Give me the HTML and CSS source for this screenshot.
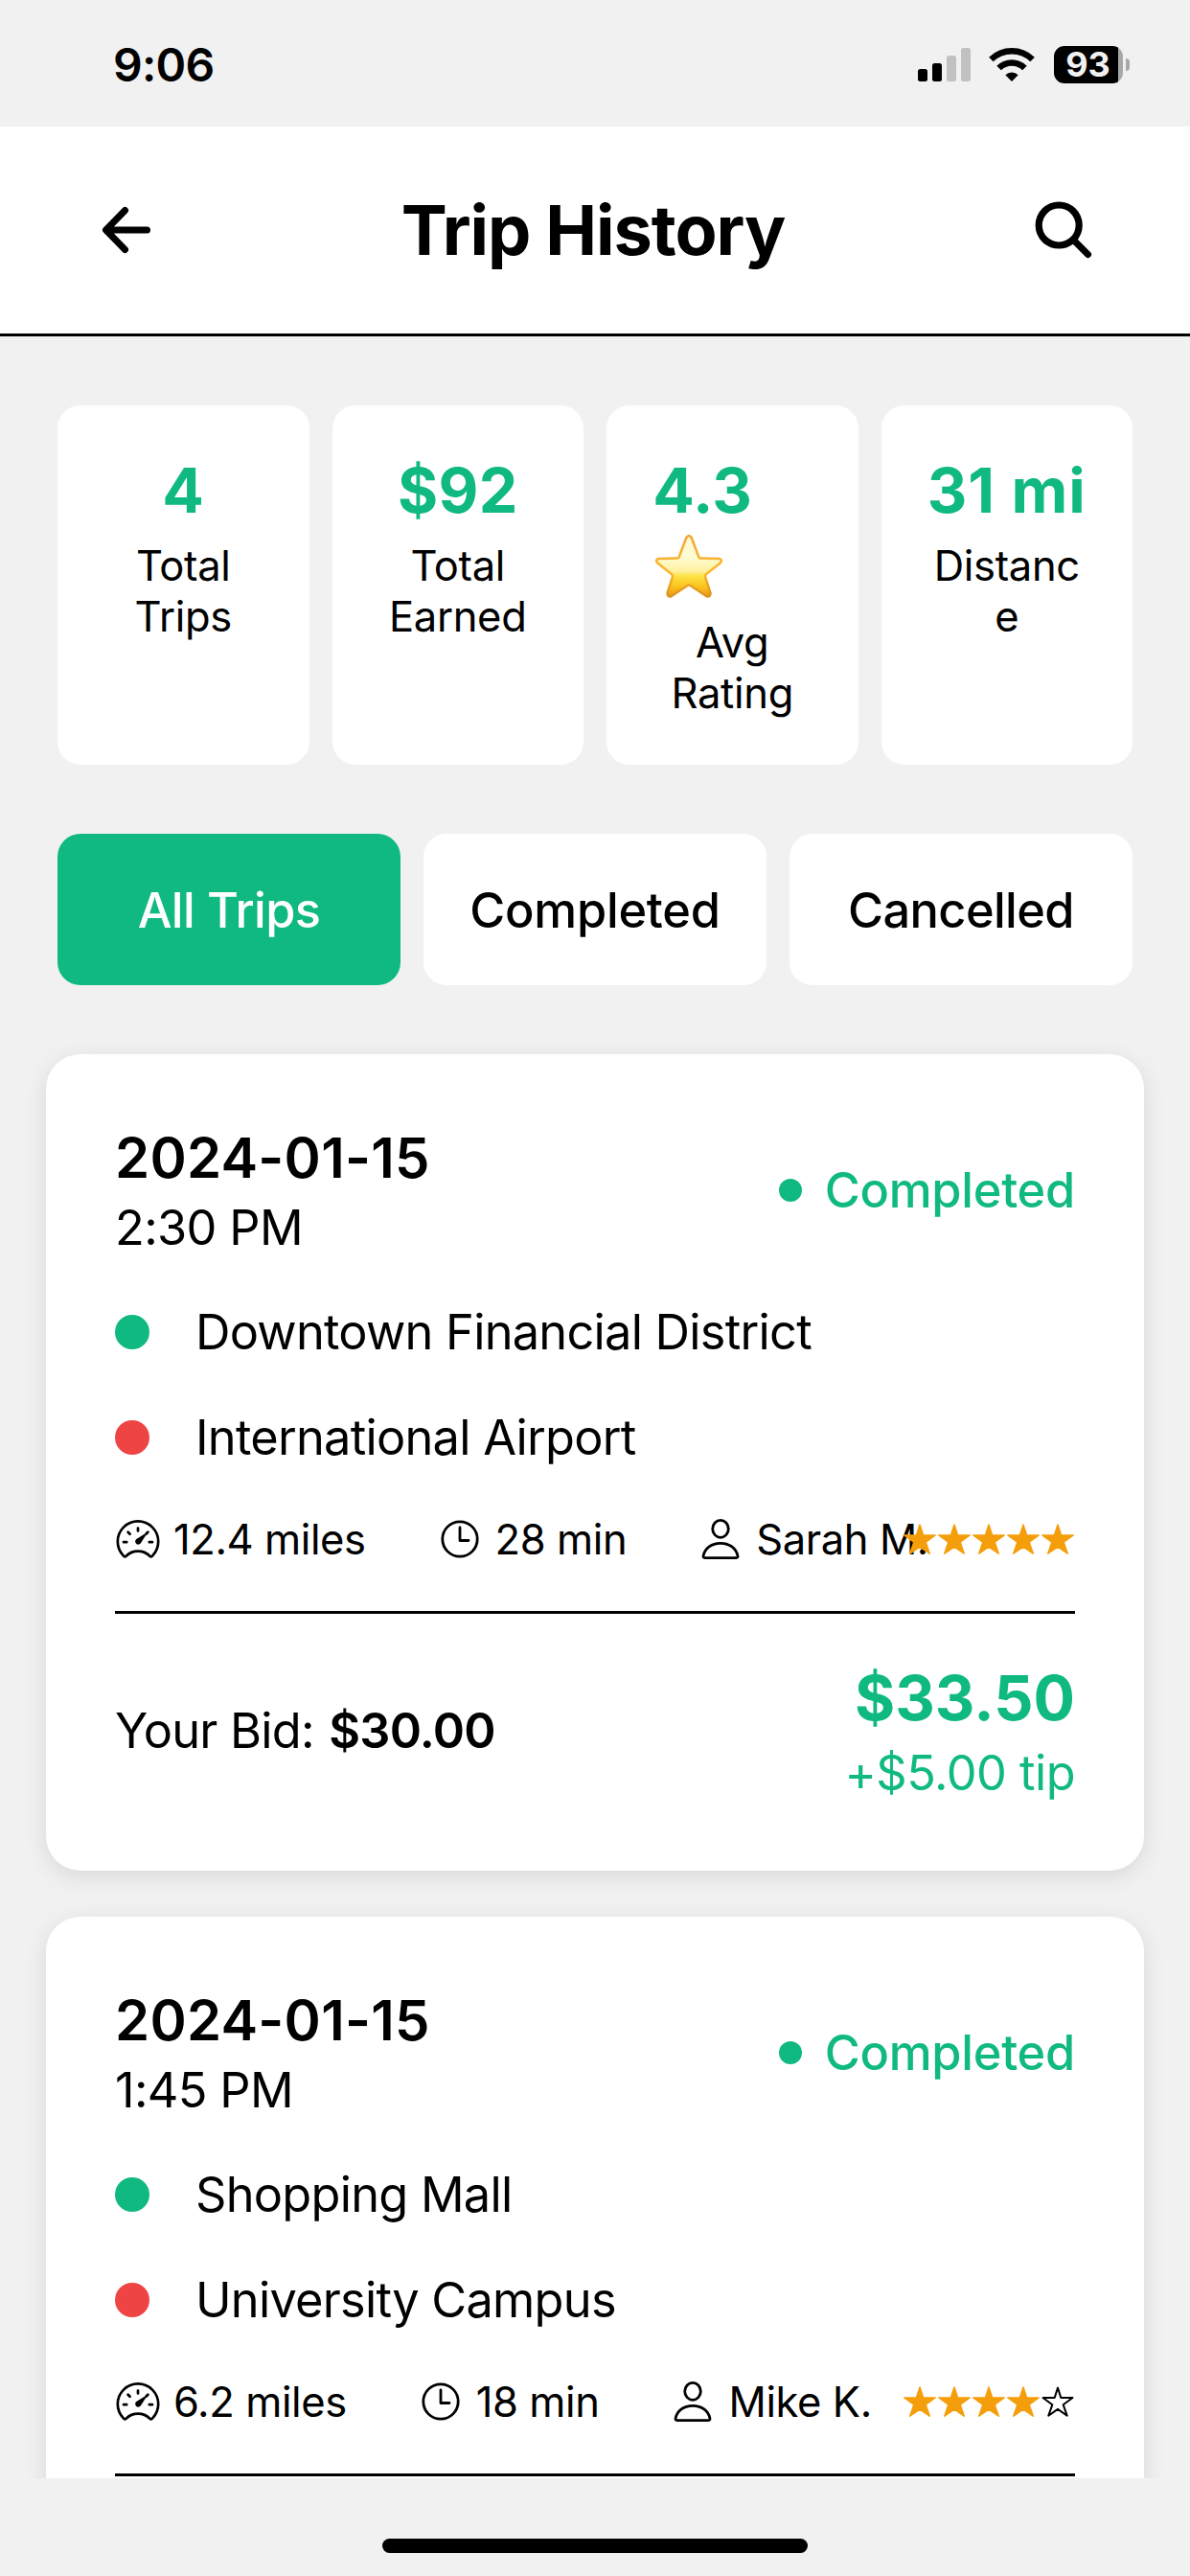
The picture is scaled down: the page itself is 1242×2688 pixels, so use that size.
FILE: index.html
```html
<!DOCTYPE html>
<html lang="en">
<head>
<meta charset="utf-8">
<title>Trip History</title>
<link rel="stylesheet" href="styles.css">
</head>
<body>
<svg class="defs" aria-hidden="true">
  <defs>
    <linearGradient id="gold" x1="0" y1="0" x2="0" y2="1">
      <stop offset="0" stop-color="#fff8d0"/>
      <stop offset=".35" stop-color="#fffcd2"/>
      <stop offset=".58" stop-color="#fff0a0"/>
      <stop offset=".66" stop-color="#fde347"/>
      <stop offset=".84" stop-color="#fbc21c"/>
      <stop offset="1" stop-color="#e8951a"/>
    </linearGradient>
    <linearGradient id="rim" x1="0" y1="0" x2="0" y2="1">
      <stop offset="0" stop-color="#f2a63a"/>
      <stop offset=".6" stop-color="#fcb92c"/>
      <stop offset="1" stop-color="#dc921f"/>
    </linearGradient>
    <symbol id="gauge" viewBox="0 0 48 48">
      <g fill="none" stroke="#000" stroke-width="2.7" stroke-linecap="round" stroke-linejoin="round">
        <path d="M9 41.6A21.2 21.2 0 1 1 39 41.6Q37.8 43 36.4 41.7C33 38.3 28.6 36.6 24 36.6S15 38.3 11.6 41.7Q10.2 43 9 41.6Z"/>
        <path d="M24 12.6v2.8M9 27.2h3.2M35.8 27.2h3.2M13.6 16.7l2 2M34.4 16.7l-2 2"/>
      </g>
      <path d="M31.6 19.4c.5.3.6.6.3 1l-5.2 8a3.1 3.1 0 1 1-4.4-4.3l8.1-5.2c.5-.3.9 0 1.200.5z"/>
    </symbol>
    <symbol id="clock" viewBox="0 0 48 48">
      <g fill="none" stroke="#000" stroke-width="2.8" stroke-linecap="round" stroke-linejoin="round">
        <circle cx="24" cy="24" r="18.2"/>
        <path d="M24 12v13.500h9"/>
      </g>
    </symbol>
    <symbol id="person" viewBox="0 0 48 48">
      <g fill="none" stroke="#000" stroke-width="2.8" stroke-linejoin="round">
        <ellipse cx="24" cy="13.300" rx="8.300" ry="9"/>
        <path d="M24 28.300C14 28.300 7.500 34.200 6.100 41.300C5.800 42.900 6.300 43.600 7.700 43.600H40.300C41.700 43.600 42.200 42.900 41.900 41.300C40.500 34.200 34 28.300 24 28.300Z"/>
      </g>
    </symbol>
    <symbol id="star" viewBox="0 0 36 36">
      <path fill="#f59e0b" stroke="#f59e0b" stroke-width="1.500" stroke-linejoin="round" d="M18 3L21.600 13.900H34.200L24.200 21.200L28.300 33.200L18 26.200L7.700 33.200L11.800 21.200L1.800 13.900H14.400Z"/>
    </symbol>
    <symbol id="star-outline" viewBox="0 0 36 36">
      <path fill="none" stroke="#000" stroke-width="2" stroke-linejoin="round" d="M18 3.600L21.300 14H33.500L23.700 21.300L27.700 32.700L18 25.900L8.300 32.700L12.300 21.300L2.500 14H14.700Z"/>
    </symbol>
  </defs>
</svg>

<div class="phone">
  <div class="status">
    <div class="status-time">9:06</div>
    <div class="status-icons">
      <svg width="56" height="40" viewBox="0 0 56 40">
        <rect x="0" y="24" width="10" height="13" rx="2.500"/>
        <rect x="15" y="18" width="10" height="19" rx="2.500"/>
        <rect x="30" y="10" width="10" height="27" rx="2.500" fill="#c1c1c1"/>
        <rect x="45" y="2" width="10" height="35" rx="2.500" fill="#c1c1c1"/>
      </svg>
      <svg class="wifi" width="48" height="40" viewBox="0 0 48 40">
        <g fill="none" stroke="#000" stroke-width="6.500">
          <path d="M2.400 14A31 31 0 0 1 45.600 14"/>
          <path d="M10.600 23A18.800 18.800 0 0 1 37.400 23"/>
        </g>
        <path d="M17.300 30.200A10 10 0 0 1 30.700 30.200L24 37Z"/>
      </svg>
      <div class="battery"><span>93</span></div>
      <div class="battery-cap"></div>
    </div>
  </div>

  <header class="header">
    <svg width="52" height="50" viewBox="0 0 52 50">
      <path fill="none" stroke="#000" stroke-width="7" stroke-linecap="round" stroke-linejoin="round" d="M24.500 4.500L4.500 25L24.500 45.500M5 25H47.500"/>
    </svg>
    <h1 class="title">Trip History</h1>
    <svg class="search" width="60" height="60" viewBox="0 0 60 60">
      <circle cx="25.200" cy="25" r="21" fill="none" stroke="#000" stroke-width="7.200"/>
      <path stroke="#000" stroke-width="7" stroke-linecap="round" d="M41 41L55.500 55.500"/>
    </svg>
  </header>

  <main class="scroll">
    <section class="stats">
      <div class="stat"><div class="num">4</div><div class="label">Total<br>Trips</div></div>
      <div class="stat"><div class="num">$92</div><div class="label">Total<br>Earned</div></div>
      <div class="stat">
        <div class="num num-rating">4.3
          <svg class="emoji" role="img" aria-label="star" width="72" height="68" viewBox="0 0 72 68">
            <path fill="url(#gold)" stroke="url(#rim)" stroke-width="2.500" stroke-linejoin="round" d="M33.200 4.200Q36 0 38.800 4.200L46.300 24.300Q46.800 25.600 48.200 25.600L67.600 26Q71.500 27.200 69 30.200L53.600 42.400Q52.600 43.300 53 44.600L58.500 62Q58.500 66.300 54.500 65.200L37.500 54Q36 53 34.500 54L17.500 65.200Q13.500 66.300 13.500 62L19 44.600Q19.400 43.300 18.400 42.400L3 30.200Q.5 27.200 4.400 26L23.800 25.600Q25.200 25.600 25.700 24.300Z"/>
          </svg>
        </div>
        <div class="label">Avg<br>Rating</div>
      </div>
      <div class="stat"><div class="num num-distance">31 mi</div><div class="label">Distanc<br>e</div></div>
    </section>

    <nav class="tabs">
      <div class="tab tab-active">All Trips</div>
      <div class="tab tab-wide">Completed</div>
      <div class="tab">Cancelled</div>
    </nav>

    <article class="card">
      <div class="card-head">
        <div>
          <div class="date">2024-01-15</div>
          <div class="time">2:30 PM</div>
        </div>
        <div class="state"><i class="state-dot"></i>Completed</div>
      </div>
      <div class="route">
        <div class="stop"><i class="dot"></i>Downtown Financial District</div>
        <div class="stop"><i class="dot dot-red"></i>International Airport</div>
      </div>
      <div class="meta">
        <div class="items">
          <div class="item"><svg class="icon"><use href="#gauge"/></svg>12.4 miles</div>
          <div class="item"><svg class="icon"><use href="#clock"/></svg>28 min</div>
          <div class="item"><svg class="icon"><use href="#person"/></svg>Sarah M.</div>
        </div>
        <div class="stars">
          <svg class="star"><use href="#star"/></svg><svg class="star"><use href="#star"/></svg><svg class="star"><use href="#star"/></svg><svg class="star"><use href="#star"/></svg><svg class="star"><use href="#star"/></svg>
        </div>
      </div>
      <div class="card-foot">
        <div class="bid">Your Bid: <b>$30.00</b></div>
        <div class="pay">
          <div class="amount">$33.50</div>
          <div class="tip">+$5.00 tip</div>
        </div>
      </div>
    </article>

    <article class="card">
      <div class="card-head">
        <div>
          <div class="date">2024-01-15</div>
          <div class="time">1:45 PM</div>
        </div>
        <div class="state"><i class="state-dot"></i>Completed</div>
      </div>
      <div class="route">
        <div class="stop"><i class="dot"></i>Shopping Mall</div>
        <div class="stop"><i class="dot dot-red"></i>University Campus</div>
      </div>
      <div class="meta">
        <div class="items">
          <div class="item"><svg class="icon"><use href="#gauge"/></svg>6.2 miles</div>
          <div class="item"><svg class="icon"><use href="#clock"/></svg>18 min</div>
          <div class="item"><svg class="icon"><use href="#person"/></svg>Mike K.</div>
        </div>
        <div class="stars">
          <svg class="star"><use href="#star"/></svg><svg class="star"><use href="#star"/></svg><svg class="star"><use href="#star"/></svg><svg class="star"><use href="#star"/></svg><svg class="star"><use href="#star-outline"/></svg>
        </div>
      </div>
      <div class="card-foot"></div>
    </article>
  </main>

  <div class="home"><div class="home-bar"></div></div>
</div>
</body>
</html>
```
FILE: styles.css
```css
* { box-sizing: border-box; }

body {
  margin: 0;
  background: #f1f1f1;
  color: #000;
  font-family: Inter, "Liberation Sans", sans-serif;
}

svg { display: block; flex: none; }

.defs { position: absolute; width: 0; height: 0; }

.phone {
  display: flex;
  flex-direction: column;
  width: 1242px;
  height: 2688px;
  overflow: hidden;
}

/* Status bar */
.status {
  display: flex;
  flex: none;
  justify-content: space-between;
  height: 132px;
  padding: 38px 63px 0 118px;
}

.status-time {
  font-size: 48px;
  font-weight: 600;
  line-height: 60px;
  letter-spacing: -0.7px;
}

.status-icons {
  display: flex;
  align-items: flex-start;
  padding-top: 10px;
}

.wifi { margin-left: 18px; }

.battery {
  width: 72px;
  height: 39px;
  margin-left: 20px;
  border-radius: 11px;
  background: linear-gradient(90deg, #000 67px, #a8a8a8 67px);
  color: #f1f1f1;
  font-size: 36px;
  font-weight: 700;
  line-height: 39px;
  text-align: center;
}

.battery span { margin-right: 1px; }

.battery-cap {
  width: 4px;
  height: 13px;
  margin: 13px 0 0 3px;
  border-radius: 0 4px 4px 0;
  background: #a8a8a8;
}

/* Header */
.header {
  display: flex;
  flex: none;
  align-items: center;
  justify-content: space-between;
  height: 219px;
  padding: 0 102px 0 106px;
  border-bottom: 3px solid #000;
  background: #fff;
}

.title {
  margin: 0;
  font-size: 72px;
  font-weight: 700;
  line-height: 88px;
  letter-spacing: -1.05px;
}

/* Scrolling content */
.scroll {
  flex: none;
  height: 2235px;
  padding-top: 72px;
  overflow: hidden;
}

.stats {
  display: flex;
  gap: 24px;
  padding: 0 60px;
}

.stat {
  display: flex;
  flex: 1 1 0;
  flex-direction: column;
  align-items: center;
  min-width: 0;
  height: 375px;
  padding: 49px 46px 48px;
  border-radius: 24px;
  background: #fff;
}

.num {
  color: #10b981;
  font-size: 64.500px;
  font-weight: 700;
  line-height: 80px;
  letter-spacing: 0.3px;
  white-space: nowrap;
}

.num-rating { width: 166px; }
.num-distance { letter-spacing: 1px; }

.emoji { margin: 5px 0 7px 2px; }

.label {
  margin-top: 12px;
  font-size: 43.500px;
  line-height: 53px;
  letter-spacing: -0.3px;
  text-align: center;
}

.tabs {
  display: flex;
  gap: 24px;
  padding: 72px 60px;
}

.tab {
  flex: 1 1 0;
  height: 158px;
  border-radius: 24px;
  background: #fff;
  font-size: 50.500px;
  font-weight: 500;
  line-height: 159px;
  letter-spacing: -0.6px;
  text-align: center;
}

.tab-wide { letter-spacing: -0.25px; }

.tab-active {
  background: #10b981;
  color: #fff;
}

/* Trip cards */
.card {
  height: 852px;
  margin: 0 48px 48px;
  padding: 72px;
  border-radius: 36px;
  background: #fff;
  box-shadow: 0 6px 24px rgba(0, 0, 0, 0.1);
}

.card-head {
  display: flex;
  align-items: center;
  justify-content: space-between;
}

.date {
  font-size: 58px;
  font-weight: 600;
  line-height: 72px;
  letter-spacing: 0.27px;
}

.time {
  margin-top: 6px;
  font-size: 50.500px;
  line-height: 62px;
  letter-spacing: -0.65px;
}

.state {
  display: flex;
  align-items: center;
  gap: 24px;
  color: #10b981;
  font-size: 50.500px;
  font-weight: 500;
  line-height: 62px;
  letter-spacing: -0.25px;
}

.state-dot {
  width: 24px;
  height: 24px;
  border-radius: 50%;
  background: #10b981;
}

.route {
  display: flex;
  flex-direction: column;
  gap: 48px;
  margin: 47px 0 48px;
}

.stop {
  display: flex;
  align-items: center;
  gap: 48px;
  font-size: 50.500px;
  line-height: 62px;
  letter-spacing: -0.74px;
}

.dot {
  width: 36px;
  height: 36px;
  border-radius: 50%;
  background: #10b981;
}

.dot-red { background: #ef4444; }

.meta {
  display: flex;
  justify-content: space-between;
  height: 54px;
  margin-bottom: 48px;
}

.items {
  display: flex;
  flex: 1 1 0;
  gap: 74px;
  min-width: 0;
}

.item {
  display: flex;
  flex: none;
  align-items: center;
  gap: 13px;
  font-size: 43.500px;
  line-height: 54px;
  letter-spacing: -0.4px;
  white-space: nowrap;
}

.icon { width: 48px; height: 48px; }

.stars {
  display: flex;
  align-items: center;
}

.star { width: 36px; height: 36px; }

.card-foot {
  display: flex;
  align-items: center;
  justify-content: space-between;
  padding-top: 48px;
  border-top: 3px solid #000;
}

.bid {
  font-size: 50.500px;
  line-height: 62px;
  letter-spacing: -0.75px;
}

.bid b { margin-left: 2px; font-weight: 600; }

.pay { text-align: right; }

.amount {
  color: #10b981;
  font-size: 64.500px;
  font-weight: 700;
  line-height: 81px;
}

.tip {
  margin-top: 6px;
  color: #10b981;
  font-size: 50.500px;
  line-height: 61px;
  letter-spacing: -0.55px;
}

/* Home indicator */
.home {
  display: flex;
  flex: 1;
  justify-content: center;
  padding-top: 63px;
}

.home-bar {
  width: 444px;
  height: 15px;
  border-radius: 8px;
  background: #000;
}
```
